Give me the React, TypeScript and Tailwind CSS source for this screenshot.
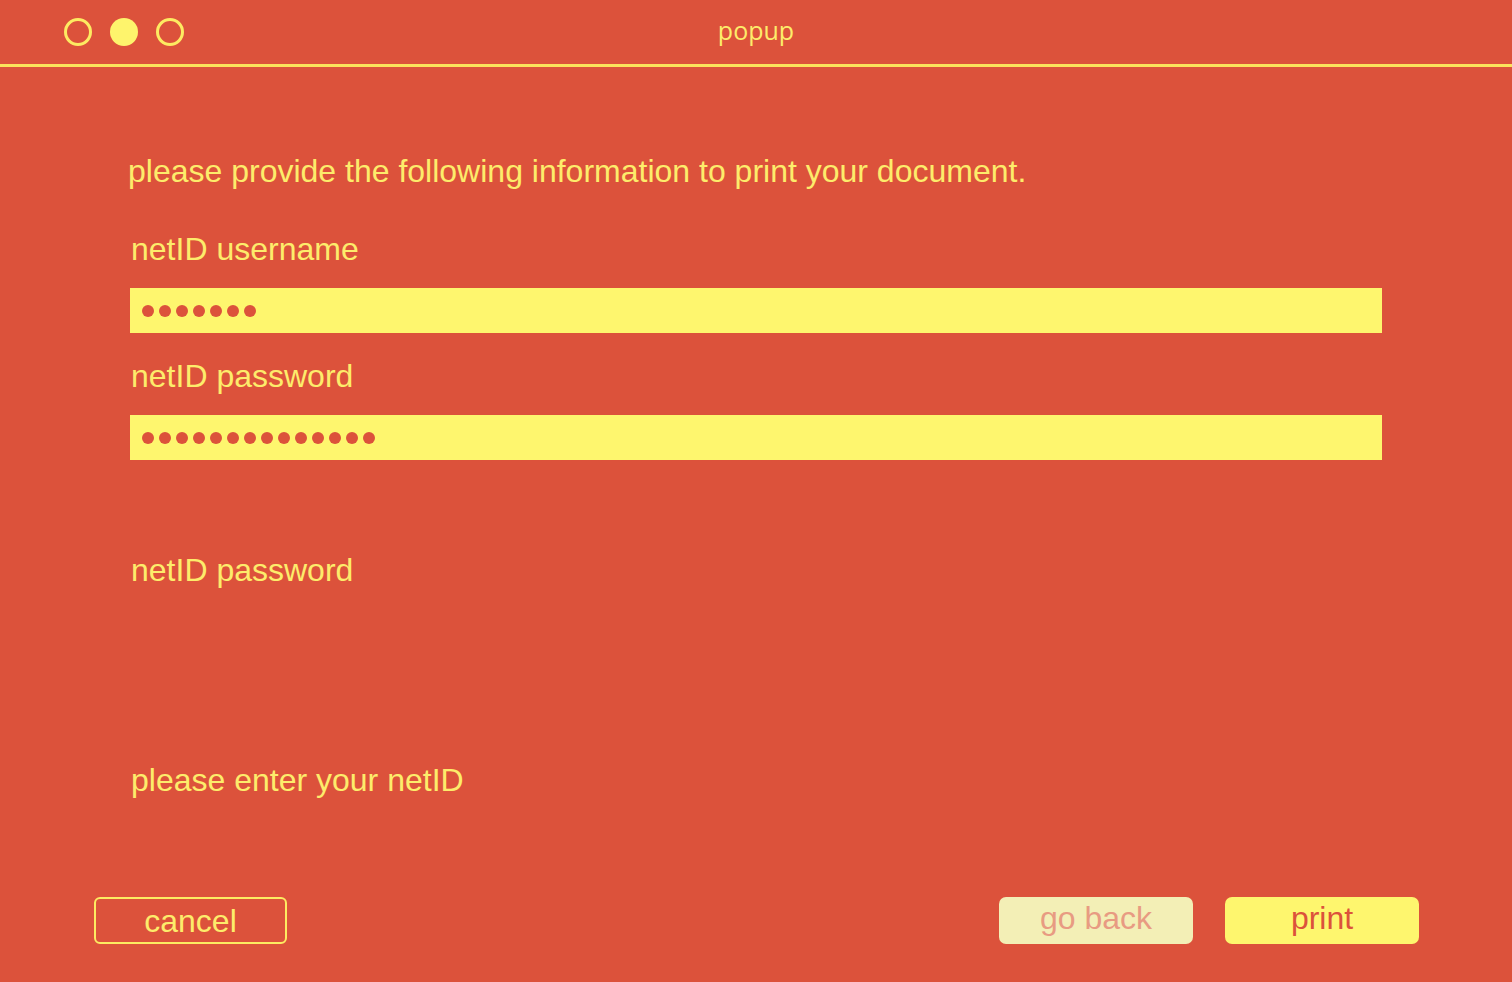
import React from "react";

const sans = "font-['Liberation_Sans',Arial,sans-serif]";

function Dots({ count }: { count: number }) {
  return (
    <div className="flex items-center gap-[5px]">
      {Array.from({ length: count }).map((_, i) => (
        <span key={i} className="block h-[12px] w-[12px] rounded-full bg-[#dc523b]" />
      ))}
    </div>
  );
}

function Label({ children, className = "" }: { children: React.ReactNode; className?: string }) {
  return (
    <div className={`text-[32px] leading-none text-[#fdec6b] whitespace-nowrap ${className}`}>
      {children}
    </div>
  );
}

export default function App() {
  return (
    <div className={`h-[982px] w-full overflow-hidden bg-[#dc523b] ${sans}`}>
      {/* title bar */}
      <div className="grid h-[67px] grid-cols-[1fr_auto_1fr] items-center border-b-[3px] border-[#fbe35c] px-[64px]">
        <div className="flex items-center gap-[18px]">
          <span className="block h-[28px] w-[28px] rounded-full border-[3px] border-[#fdeb62]" />
          <span className="block h-[28px] w-[28px] rounded-full bg-[#fef46c]" />
          <span className="block h-[28px] w-[28px] rounded-full border-[3px] border-[#fdeb62]" />
        </div>
        <div className="font-['Open_Sans',sans-serif] text-[25px] leading-none text-[#fdec6b] pb-[3px]">popup</div>
        <div />
      </div>

      <div className="flex flex-col px-[130px]">
        <Label className="mt-[88px] ml-[-2px]">please provide the following information to print your document.</Label>

        <Label className="mt-[46px] ml-[1px]">netID username</Label>
        <div className="mt-[23px] flex h-[45px] items-center bg-[#fef66e] pl-[12px]">
          <Dots count={7} />
        </div>

        <Label className="mt-[27px] ml-[1px]">netID password</Label>
        <div className="mt-[23px] flex h-[45px] items-center bg-[#fef66e] pl-[12px]">
          <Dots count={14} />
        </div>

        <Label className="mt-[94px] ml-[1px]">netID password</Label>

        <Label className="mt-[178px] ml-[1px]">please enter your netID</Label>
      </div>

      <div className="mt-[101px] flex items-center justify-between pl-[94px] pr-[93px]">
        <button className="flex h-[47px] w-[193px] items-center justify-center rounded-[6px] border-2 border-[#fdeb62] text-[32px] leading-none text-[#fdec6b]">
          cancel
        </button>
        <div className="flex items-center gap-[32px]">
          <button className="flex h-[47px] w-[194px] items-center justify-center rounded-[7px] bg-[#f3efb6] pb-[5px] text-[32px] leading-none text-[#e89b82]">
            go back
          </button>
          <button className="flex h-[47px] w-[194px] items-center justify-center rounded-[7px] bg-[#fef66e] pb-[5px] text-[32px] leading-none text-[#dc523b]">
            print
          </button>
        </div>
      </div>
    </div>
  );
}
